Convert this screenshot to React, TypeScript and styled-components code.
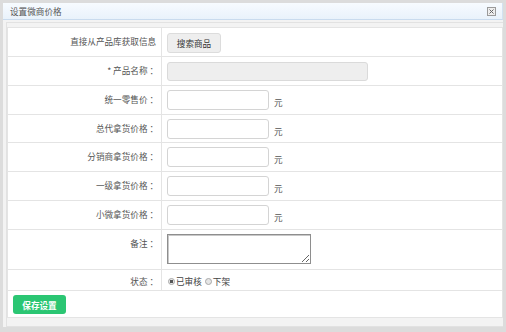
import styled, { createGlobalStyle } from 'styled-components'

const GlobalStyle = createGlobalStyle`
  html, body {
    margin: 0;
    padding: 0;
    background: #dcdcdc;
  }
  body {
    font-family: "Noto Sans CJK SC", "Liberation Sans", sans-serif;
    font-size: 8.6px;
    color: #555;
  }
`

const Frame = styled.div`
  width: 506px;
  height: 332px;
  box-sizing: border-box;
  padding: 3px 3px 5px 3px;
  background: #dcdcdc;
`

const Window = styled.div`
  height: 100%;
  display: flex;
  flex-direction: column;
  background: #f3f3f3;
`

const Header = styled.div`
  height: 16px;
  display: flex;
  align-items: center;
  justify-content: space-between;
  padding: 0 6px 0 7px;
  background: linear-gradient(#f7fbff, #e9f2fb);
  border-bottom: 1px solid #c9dbee;
  border-right: 1px solid #d3e2f2;
  color: #555;
`

const Title = styled.span`
  font-size: 8.6px;
`

const Close = styled.span`
  width: 7px;
  height: 7px;
  border: 1px solid #9a9a9a;
  background: #eee;
  display: flex;
  align-items: center;
  justify-content: center;
`

const Panel = styled.div`
  flex: 1;
  margin: 2px 0 0 3px;
  padding: 4px 0 8px 0;
  border: 1px solid #e2e2e2;
  border-right: none;
  background: #f3f3f3;
`

const Table = styled.table`
  width: 100%;
  border-collapse: collapse;
  background: #fff;
  border: 1px solid #e4e4e4;
`

const Row = styled.tr<{ $h: number }>`
  height: ${p => p.$h}px;
`

const Label = styled.td<{ $top?: number }>`
  width: 150px;
  text-align: right;
  vertical-align: top;
  padding: ${p => p.$top ?? 7}px 3px 0 0;
  line-height: 12px;
  border: 1px solid #e4e4e4;
  color: #555;
  white-space: pre;
`

const Cell = styled.td<{ $pad?: string }>`
  vertical-align: top;
  padding: ${p => p.$pad ?? '4px 5px 0 5px'};
  border: 1px solid #e4e4e4;
`

const Line = styled.div`
  display: flex;
  align-items: center;
  gap: 5px;
`

const Button = styled.button`
  display: block;
  height: 20px;
  width: 54px;
  padding: 0;
  border: 1px solid #dcdcdc;
  border-radius: 3px;
  background: #eee;
  color: #333;
  font: inherit;
  margin-top: 1px;
`

const Input = styled.input<{ $w: number; $disabled?: boolean }>`
  display: block;
  box-sizing: border-box;
  width: ${p => p.$w}px;
  height: ${p => (p.$disabled ? 19 : 20)}px;
  border: 1px solid ${p => (p.$disabled ? '#dadada' : '#d4d4d4')};
  border-radius: 3px;
  background: ${p => (p.$disabled ? '#eee' : '#fff')};
  padding: 0 4px;
  margin: ${p => (p.$disabled ? '1px 0 0 0' : '0')};
  font: inherit;
`

const Unit = styled.span`
  color: #555;
  padding-top: 3px;
`

const Area = styled.textarea`
  box-sizing: border-box;
  width: 144px;
  height: 30px;
  margin: 0;
  border: 1px solid #8e8e8e;
  box-shadow: inset 1px 1px 0 #c8c8c8;
  font: inherit;
  display: block;
`

const Radios = styled.div`
  display: flex;
  align-items: center;
  color: #444;
  line-height: 12px;
`

const Dot = styled.span<{ $on?: boolean; $gap?: number }>`
  box-sizing: border-box;
  width: 7px;
  height: 7px;
  border-radius: 50%;
  border: 1px solid #a8a8a8;
  background: ${p => (p.$on ? 'radial-gradient(circle, #555 0 1.5px, #e8e8e8 2px)' : '#e6e6e6')};
  margin: 0 1px 0 ${p => p.$gap ?? 1}px;
`

const Save = styled.button`
  display: block;
  height: 19px;
  width: 53px;
  padding: 0;
  border: none;
  border-radius: 3px;
  background: #2bc673;
  color: #fff;
  font: inherit;
  font-weight: bold;
`

const prices = ['统一零售价 ：', '总代拿货价格 ：', '分销商拿货价格 ：', '一级拿货价格 ：', '小微拿货价格 ：']

export default function App() {
  return (
    <>
      <GlobalStyle />
      <Frame>
        <Window>
          <Header>
            <Title>设置微商价格</Title>
            <Close>
              <svg width="5" height="5" viewBox="0 0 5 5">
                <path d="M0.5 0.5L4.5 4.5M4.5 0.5L0.5 4.5" stroke="#666" strokeWidth="1" />
              </svg>
            </Close>
          </Header>
          <Panel>
            <Table>
              <tbody>
                <Row $h={29}>
                  <Label>直接从产品库获取信息 </Label>
                  <Cell>
                    <Button>搜索商品</Button>
                  </Cell>
                </Row>
                <Row $h={29}>
                  <Label>* 产品名称 ：</Label>
                  <Cell>
                    <Input $w={201} $disabled readOnly />
                  </Cell>
                </Row>
                {prices.map((t, i) => (
                  <Row key={t} $h={i === 1 ? 28 : 29}>
                    <Label>{t}</Label>
                    <Cell>
                      <Line>
                        <Input $w={102} />
                        <Unit>元</Unit>
                      </Line>
                    </Cell>
                  </Row>
                ))}
                <Row $h={40}>
                  <Label>备注 ：</Label>
                  <Cell>
                    <Area />
                  </Cell>
                </Row>
                <Row $h={21}>
                  <Label $top={5}>状态 ：</Label>
                  <Cell $pad="5px 5px 0 5px">
                    <Radios>
                      <Dot $on />
                      已审核
                      <Dot $gap={3} />
                      下架
                    </Radios>
                  </Cell>
                </Row>
                <Row $h={27}>
                  <Cell colSpan={2} $pad="4px 5px 3px 5px">
                    <Save>保存设置</Save>
                  </Cell>
                </Row>
              </tbody>
            </Table>
          </Panel>
        </Window>
      </Frame>
    </>
  )
}
